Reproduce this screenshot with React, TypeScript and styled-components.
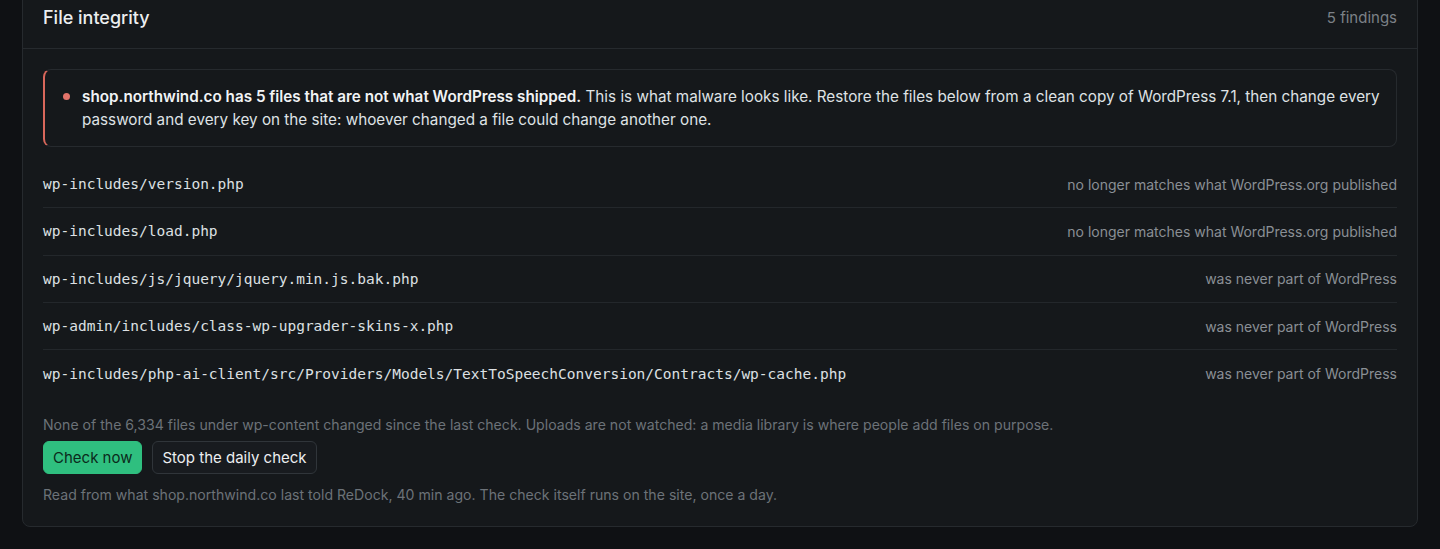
import React from 'react';
import styled, { createGlobalStyle } from 'styled-components';

const files = [
  { path: 'wp-includes/version.php', status: 'no longer matches what WordPress.org published' },
  { path: 'wp-includes/load.php', status: 'no longer matches what WordPress.org published' },
  { path: 'wp-includes/js/jquery/jquery.min.js.bak.php', status: 'was never part of WordPress' },
  { path: 'wp-admin/includes/class-wp-upgrader-skins-x.php', status: 'was never part of WordPress' },
  {
    path: 'wp-includes/php-ai-client/src/Providers/Models/TextToSpeechConversion/Contracts/wp-cache.php',
    status: 'was never part of WordPress',
  },
];

const GlobalStyle = createGlobalStyle`
  html, body {
    margin: 0;
    background: #0f1114;
    font-family: Inter, "Noto Sans", sans-serif;
    color: #d9dcdf;
  }
  * { box-sizing: border-box; }
`;

const App = () => {
  return (
    <>
      <GlobalStyle />
      <Page>
        <Card>
          <Header>
            <Title>File integrity</Title>
            <Count>5 findings</Count>
          </Header>
          <Body>
            <Alert>
              <Dot />
              <AlertText>
                <strong>shop.northwind.co has 5 files that are not what WordPress shipped.</strong> This is
                what malware looks like. Restore the files below from a clean copy of WordPress 7.1, then
                change every password and every key on the site: whoever changed a file could change
                another one.
              </AlertText>
            </Alert>
            <FileList>
              {files.map((f) => (
                <FileRow key={f.path}>
                  <Path>{f.path}</Path>
                  <Status>{f.status}</Status>
                </FileRow>
              ))}
            </FileList>
            <Note>
              None of the 6,334 files under wp-content changed since the last check. Uploads are not
              watched: a media library is where people add files on purpose.
            </Note>
            <Actions>
              <Button primary>Check now</Button>
              <Button>Stop the daily check</Button>
            </Actions>
            <Note>
              Read from what shop.northwind.co last told ReDock, 40 min ago. The check itself runs on the
              site, once a day.
            </Note>
          </Body>
        </Card>
      </Page>
    </>
  );
};

const Page = styled.div`
  padding: 0 22px 23px;
  min-height: 549px;
  overflow: hidden;
`;

const Card = styled.section`
  margin-top: -14px;
  background: #15181b;
  border: 1px solid #262a2e;
  border-radius: 8px;
`;

const Header = styled.div`
  display: flex;
  align-items: center;
  justify-content: space-between;
  padding: 14px 20px 14px;
  height: 62px;
  border-bottom: 1px solid #262a2e;
`;

const Title = styled.h2`
  margin: 0;
  font-size: 18px;
  font-weight: 500;
  color: #eceef0;
`;

const Count = styled.span`
  font-size: 15px;
  color: #7c8187;
`;

const Body = styled.div`
  display: flex;
  flex-direction: column;
  padding: 20px 20px 21px;
`;

const Alert = styled.div`
  display: flex;
  align-items: flex-start;
  gap: 12px;
  padding: 15px 10px 15px 18px;
  border: 1px solid #262a2e;
  border-left: 2px solid #d8675b;
  border-radius: 8px;
`;

const Dot = styled.span`
  flex: none;
  width: 7px;
  height: 7px;
  margin-top: 8px;
  border-radius: 50%;
  background: #e2736a;
`;

const AlertText = styled.p`
  margin: 0;
  font-size: 15.25px;
  line-height: 23px;
  color: #dfe2e5;

  strong {
    font-weight: 600;
    color: #f1f3f5;
  }
`;

const FileList = styled.div`
  display: flex;
  flex-direction: column;
  margin-top: 14px;
`;

const FileRow = styled.div`
  display: flex;
  align-items: center;
  justify-content: space-between;
  height: 47.3px;
  border-bottom: 1px solid #23272b;

  &:last-child {
    border-bottom: none;
  }
`;

const Path = styled.span`
  font-family: "DejaVu Sans Mono", "Liberation Mono", monospace;
  font-size: 14.5px;
  color: #dde0e3;
`;

const Status = styled.span`
  font-size: 14px;
  color: #8a8f95;
`;

const Note = styled.p`
  margin: 18px 0 0;
  font-size: 14.1px;
  line-height: 20px;
  color: #6c7278;

  & + div {
    margin-top: 6px;
  }
`;

const Actions = styled.div`
  display: flex;
  gap: 10px;

  & + p {
    margin-top: 11px;
  }
`;

const Button = styled.button<{ primary?: boolean }>`
  height: 33px;
  padding: 0 9px;
  font-family: inherit;
  font-size: 15px;
  border-radius: 6px;
  border: 1px solid ${({ primary }) => (primary ? '#2fbf7f' : '#30353a')};
  background: ${({ primary }) => (primary ? '#2fbf7f' : '#181b1f')};
  color: ${({ primary }) => (primary ? '#0b2a1b' : '#eceef0')};
  cursor: pointer;
`;

export default App;
